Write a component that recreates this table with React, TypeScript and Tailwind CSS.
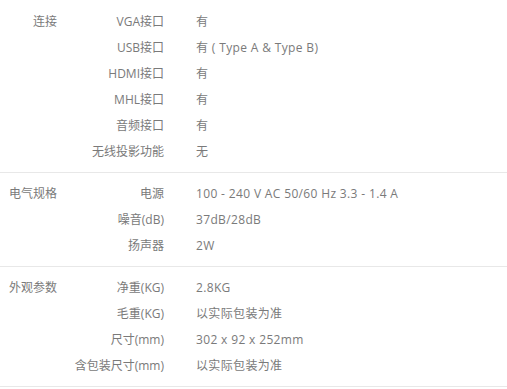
import React from 'react';

type Spec = { key: string; value: string };
type Group = { title: string; specs: Spec[] };

const GROUPS: Group[] = [
  {
    title: '连接',
    specs: [
      { key: 'VGA接口', value: '有' },
      { key: 'USB接口', value: '有 ( Type A & Type B)' },
      { key: 'HDMI接口', value: '有' },
      { key: 'MHL接口', value: '有' },
      { key: '音频接口', value: '有' },
      { key: '无线投影功能', value: '无' },
    ],
  },
  {
    title: '电气规格',
    specs: [
      { key: '电源', value: '100 - 240 V AC 50/60 Hz 3.3 - 1.4 A' },
      { key: '噪音(dB)', value: '37dB/28dB' },
      { key: '扬声器', value: '2W' },
    ],
  },
  {
    title: '外观参数',
    specs: [
      { key: '净重(KG)', value: '2.8KG' },
      { key: '毛重(KG)', value: '以实际包装为准' },
      { key: '尺寸(mm)', value: '302 x 92 x 252mm' },
      { key: '含包装尺寸(mm)', value: '以实际包装为准' },
    ],
  },
];

export default function App() {
  return (
    <div
      className="w-[507px] h-[389px] overflow-hidden bg-white pt-px text-[12px] text-[#7a7a7a]"
      style={{ fontFamily: '"Open Sans", "Noto Sans CJK SC", sans-serif' }}
    >
      {GROUPS.map((group) => (
        <div key={group.title} className="flex border-b border-[#e8e8e8] pt-2 pb-[7px]">
          <div className="w-[57px] shrink-0 text-right leading-[26px]">{group.title}</div>
          <div className="flex flex-col">
            {group.specs.map((spec) => (
              <div key={spec.key} className="flex h-[26px] items-center">
                <div className="w-[107px] shrink-0 text-right">{spec.key}</div>
                <div className="pl-[32px] whitespace-nowrap tracking-[0.35px]">{spec.value}</div>
              </div>
            ))}
          </div>
        </div>
      ))}
    </div>
  );
}
